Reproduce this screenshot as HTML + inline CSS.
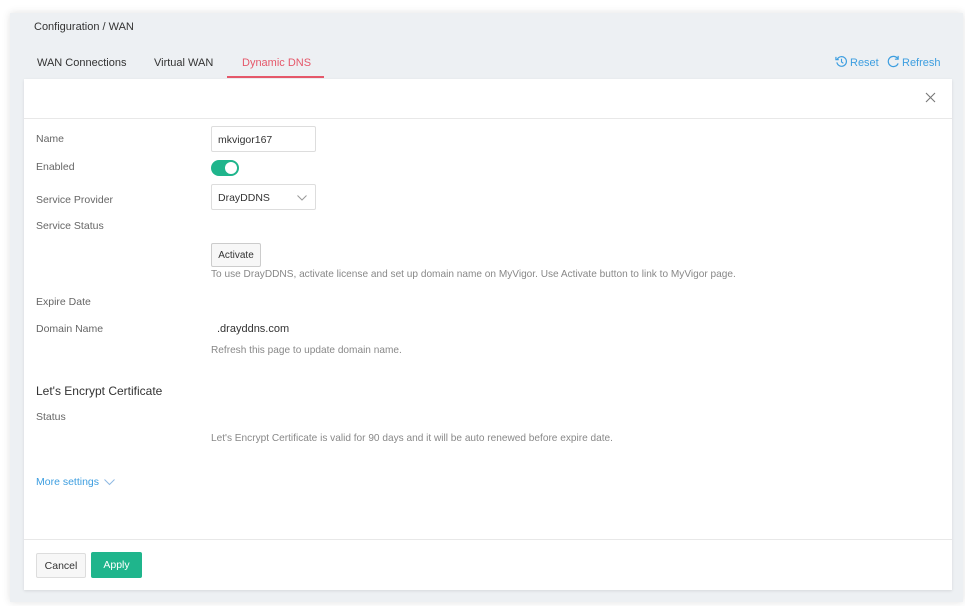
<!DOCTYPE html>
<html><head><meta charset="utf-8"><style>
*{box-sizing:border-box;margin:0;padding:0}
body{width:965px;height:606px;background:#fff;font-family:"Liberation Sans",sans-serif;position:relative;overflow:hidden;color:#333}
.panel{position:absolute;left:10px;top:13px;width:953px;height:589px;background:#edf0f3;box-shadow:0 0 8px rgba(0,0,0,.12)}
.t{position:absolute;font-size:11px;white-space:nowrap}
.card{position:absolute;left:24px;top:79px;width:928px;height:511px;background:#fff;box-shadow:0 1px 3px rgba(0,0,0,.1)}
.lbl{position:absolute;left:12px;font-size:10.5px;color:#666}
.hint{position:absolute;left:187px;font-size:10.1px;color:#888;white-space:nowrap}
.in{position:absolute;left:187px;border:1px solid #ddd;border-radius:2px;font-size:10.5px;color:#333;padding-left:6px;background:#fff}
</style></head><body>
<div class="panel"></div>
<div class="t" style="left:34px;top:21px;color:#333">Configuration / WAN</div>
<div class="t" style="left:37px;top:57px;font-size:11px;color:#333">WAN Connections</div>
<div class="t" style="left:154px;top:57px;color:#333">Virtual WAN</div>
<div class="t" style="left:242px;top:57px;color:#e5586a">Dynamic DNS</div>
<div style="position:absolute;left:227px;top:76px;width:97px;height:2px;background:#e5586a"></div>
<svg style="position:absolute;left:835px;top:55px" width="13" height="13" viewBox="0 0 14 14"><path d="M2.5 4.5A5.2 5.2 0 1 1 2 8" fill="none" stroke="#3d9ee0" stroke-width="1.3"/><path d="M1 2v3h3" fill="none" stroke="#3d9ee0" stroke-width="1.3"/><path d="M7 4v3.5l2 1.5" fill="none" stroke="#3d9ee0" stroke-width="1.2"/></svg>
<div class="t" style="left:850px;top:57px;color:#3d9ee0">Reset</div>
<svg style="position:absolute;left:887px;top:55px" width="13" height="13" viewBox="0 0 14 14"><path d="M11.5 4A5.5 5.5 0 1 0 12 9" fill="none" stroke="#3d9ee0" stroke-width="1.3"/><path d="M12 1v3.5H8.5" fill="none" stroke="#3d9ee0" stroke-width="1.3"/></svg>
<div class="t" style="left:902px;top:57px;color:#3d9ee0">Refresh</div>
<div class="card">
<div style="position:absolute;left:0;top:39px;width:100%;height:1px;background:#e8e8e8"></div>
<svg style="position:absolute;left:901px;top:13px" width="11" height="11" viewBox="0 0 11 11"><path d="M1 1L10 10M10 1L1 10" stroke="#777" stroke-width="1.1"/></svg>
<div class="lbl" style="top:54px">Name</div>
<div class="in" style="top:47px;width:105px;height:26px;line-height:26px">mkvigor167</div>
<div class="lbl" style="top:82px">Enabled</div>
<div style="position:absolute;left:187px;top:81px;width:28px;height:16px;border-radius:8px;background:#1fb58c"><div style="position:absolute;right:2px;top:2px;width:12px;height:12px;border-radius:50%;background:#fff"></div></div>
<div class="lbl" style="top:115px">Service Provider</div>
<div class="in" style="top:105px;width:105px;height:26px;line-height:26px">DrayDDNS<svg style="position:absolute;right:8px;top:10px" width="10" height="6" viewBox="0 0 10 6"><path d="M0.5 0.5L5 5L9.5 0.5" fill="none" stroke="#999"/></svg></div>
<div class="lbl" style="top:141px">Service Status</div>
<div style="position:absolute;left:187px;top:164px;width:50px;height:24px;border:1px solid #ccc;border-radius:2px;background:#f7f7f7;font-size:10px;text-align:center;line-height:24px;color:#333">Activate</div>
<div class="hint" style="top:190px">To use DrayDDNS, activate license and set up domain name on MyVigor. Use Activate button to link to MyVigor page.</div>
<div class="lbl" style="top:217px">Expire Date</div>
<div class="lbl" style="top:244px">Domain Name</div>
<div style="position:absolute;left:193px;top:244px;font-size:11px;color:#333">.drayddns.com</div>
<div class="hint" style="top:266px">Refresh this page to update domain name.</div>
<div style="position:absolute;left:12px;top:305px;font-size:12px;color:#333">Let's Encrypt Certificate</div>
<div class="lbl" style="top:332px">Status</div>
<div class="hint" style="top:354px">Let's Encrypt Certificate is valid for 90 days and it will be auto renewed before expire date.</div>
<div style="position:absolute;left:12px;top:397px;font-size:10.5px;color:#3d9ee0">More settings</div>
<svg style="position:absolute;left:80px;top:400px" width="11" height="7" viewBox="0 0 11 7"><path d="M0.5 0.5L5.5 5.5L10.5 0.5" fill="none" stroke="#8fb9e3"/></svg>
<div style="position:absolute;left:0;top:460px;width:100%;height:1px;background:#e8e8e8"></div>
<div style="position:absolute;left:12px;top:474px;width:50px;height:25px;border:1px solid #ddd;border-radius:2px;background:#f7f7f7;font-size:10.5px;text-align:center;line-height:25px;color:#333">Cancel</div>
<div style="position:absolute;left:67px;top:473px;width:51px;height:26px;border-radius:2px;background:#1fb58c;font-size:10.5px;text-align:center;line-height:27px;color:#fff">Apply</div>
</div>
</body></html>
